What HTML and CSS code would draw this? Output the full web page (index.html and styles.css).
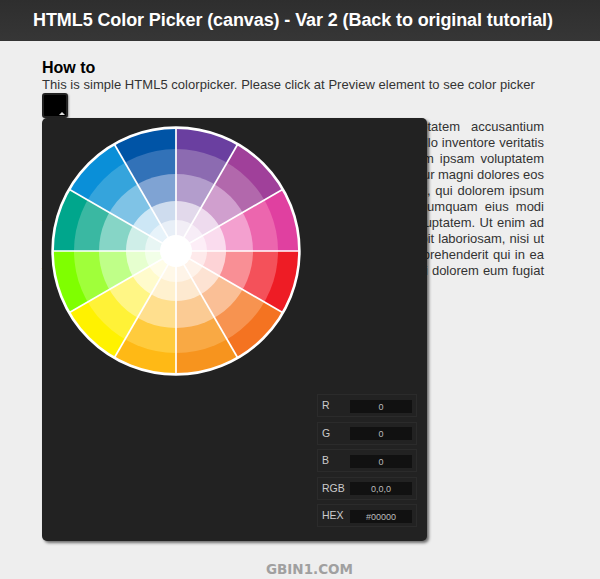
FILE: index.html
```html
<!DOCTYPE html>
<html lang="en">
<head>
<meta charset="utf-8">
<title>HTML5 Color Picker (canvas)</title>
<link rel="stylesheet" href="styles.css">
</head>
<body>
<header class="bar"><h1>HTML5 Color Picker (canvas) - Var 2 (Back to original tutorial)</h1></header>
<main class="content">
  <h2>How to</h2>
  <p class="intro">This is simple HTML5 colorpicker. Please click at Preview element to see color picker</p>
  <div class="anchor">
    <div class="preview"><span class="caret"></span></div>
    <section class="picker">
      <div class="wheel">
        <div class="ring r1"></div>
        <div class="ring r2"></div>
        <div class="ring r3"></div>
        <div class="ring r4"></div>
        <div class="ring r5"></div>
        <svg class="spokes" viewBox="-125 -125 250 250" width="250" height="250" aria-hidden="true">
          <circle r="123.4" fill="none" stroke="#fff" stroke-width="2.6"/>
          <g stroke="#fff" stroke-width="1.7">
            <line x1="0" y1="-123" x2="0" y2="123"/>
            <line x1="-123" y1="0" x2="123" y2="0"/>
            <line x1="61.5" y1="-106.5" x2="-61.5" y2="106.5"/>
            <line x1="106.5" y1="-61.5" x2="-106.5" y2="61.5"/>
            <line x1="-61.5" y1="-106.5" x2="61.5" y2="106.5"/>
            <line x1="-106.5" y1="-61.5" x2="106.5" y2="61.5"/>
          </g>
          <circle r="16" fill="#fff"/>
        </svg>
      </div>
      <div class="values">
        <div class="row"><label>R</label><output>0</output></div>
        <div class="row"><label>G</label><output>0</output></div>
        <div class="row"><label>B</label><output>0</output></div>
        <div class="row"><label>RGB</label><output>0,0,0</output></div>
        <div class="row"><label>HEX</label><output>#00000</output></div>
      </div>
    </section>
  </div>
  <p class="lorem">
    <span class="line">Sed ut perspiciatis unde omnis iste natus error sit voluptatem accusantium</span>
    <span class="line">doloremque laudantium, totam rem aperiam, eaque ipsa quae ab illo inventore veritatis</span>
    <span class="line">et quasi architecto beatae vitae dicta sunt explicabo. Nemo enim ipsam voluptatem</span>
    <span class="line">quia voluptas sit aspernatur aut odit aut fugit, sed quia consequuntur magni dolores eos</span>
    <span class="line">qui ratione voluptatem sequi nesciunt. Neque porro quisquam est, qui dolorem ipsum</span>
    <span class="line">quia dolor sit amet, consectetur, adipisci velit, sed quia non numquam eius modi</span>
    <span class="line">tempora incidunt ut labore et dolore magnam aliquam quaerat voluptatem. Ut enim ad</span>
    <span class="line">minima veniam, quis nostrum exercitationem ullam corporis suscipit laboriosam, nisi ut</span>
    <span class="line">aliquid ex ea commodi consequatur? Quis autem vel eum iure reprehenderit qui in ea</span>
    <span class="line">voluptate velit esse quam nihil molestiae consequatur, vel illum qui dolorem eum fugiat</span>
    <span class="last">quo voluptas nulla pariatur?</span>
  </p>
</main>
<footer class="mark">GBIN1.COM</footer>
</body>
</html>
```
FILE: styles.css
```css
* { box-sizing: border-box; }
html, body { margin: 0; padding: 0; }
body {
  height: 579px;
  overflow: hidden;
  display: flex;
  flex-direction: column;
  background: #eee;
  color: #333;
  font-family: "Liberation Sans", Arial, sans-serif;
}
.bar {
  height: 41px;
  flex: none;
  background: linear-gradient(#2e2e2e, #363636);
  border-bottom: 1px solid #333;
}
.bar h1 {
  margin: 0;
  padding: 9px 14px 0 0;
  color: #fff;
  font-size: 18px;
  line-height: 22px;
  font-weight: bold;
  letter-spacing: -0.1px;
  text-align: center;
}
.content {
  width: 502px;
  margin: 18px 0 0 42px;
  flex: none;
}
.content h2 {
  margin: 0;
  color: #000;
  font-size: 16px;
  line-height: 18px;
  font-weight: bold;
}
.intro {
  margin: 0;
  font-size: 13px;
  line-height: 16px;
  letter-spacing: 0.035px;
}
.anchor {
  position: relative;
  height: 25px;
}
.preview {
  position: relative;
  width: 26px;
  height: 25px;
  background: #000;
  border: 2px solid #222;
  border-radius: 3px;
  box-shadow: 1px 1px 2px rgba(0,0,0,.35);
}
.caret {
  position: absolute;
  right: 1px;
  bottom: 1px;
  width: 0;
  height: 0;
  border-left: 3px solid transparent;
  border-right: 3px solid transparent;
  border-bottom: 3px solid #ddd;
}
.picker {
  position: absolute;
  z-index: 2;
  left: 0;
  top: 25px;
  width: 385px;
  height: 423px;
  padding: 8px 10px 14px 8.5px;
  display: flex;
  flex-direction: column;
  justify-content: space-between;
  background: #222;
  border-radius: 5px;
  box-shadow: 2px 2px 3px rgba(0,0,0,.55);
}
.wheel {
  width: 250px;
  height: 250px;
  display: grid;
  place-items: center;
}
.wheel > * { grid-area: 1 / 1; }
.spokes { display: block; }
.ring { border-radius: 50%; }
.r1 {
  width: 246px; height: 246px;
  background: conic-gradient(#6a3fa0 0 30deg, #a0409a 0 60deg, #e040a0 0 90deg, #ee1c25 0 120deg, #f47321 0 150deg, #f7941e 0 180deg, #ffb915 0 210deg, #fff200 0 240deg, #7fff00 0 270deg, #00a68c 0 300deg, #0a8fd8 0 330deg, #0054a6 0 360deg);
}
.r2 {
  width: 204px; height: 204px;
  background: conic-gradient(#8c6bb1 0 30deg, #b268ac 0 60deg, #ec66ae 0 90deg, #f4515a 0 120deg, #f79350 0 150deg, #f9a944 0 180deg, #ffcb3d 0 210deg, #fff237 0 240deg, #a0ff3a 0 270deg, #3ab8a2 0 300deg, #35a4dc 0 330deg, #3272b8 0 360deg);
}
.r3 {
  width: 154px; height: 154px;
  background: conic-gradient(#b39dcc 0 30deg, #d09fce 0 60deg, #f3a0cf 0 90deg, #f98f95 0 120deg, #fabf96 0 150deg, #fbcb94 0 180deg, #ffdf8e 0 210deg, #fff685 0 240deg, #bfff88 0 270deg, #86d5c6 0 300deg, #7fc3e6 0 330deg, #7fa3d3 0 360deg);
}
.r4 {
  width: 100px; height: 100px;
  background: conic-gradient(#e2d9eb 0 30deg, #eedbee 0 60deg, #fadcee 0 90deg, #fdd3d6 0 120deg, #fde3d3 0 150deg, #fde9d0 0 180deg, #fff1cf 0 210deg, #fffbcc 0 240deg, #e6ffcf 0 270deg, #cfeee8 0 300deg, #cde7f6 0 330deg, #cedcee 0 360deg);
}
.r5 {
  width: 62px; height: 62px;
  background: conic-gradient(#f2eef6 0 30deg, #f7edf7 0 60deg, #fdeef7 0 90deg, #feeaeb 0 120deg, #fef2e9 0 150deg, #fef4e8 0 180deg, #fff8e8 0 210deg, #fffde8 0 240deg, #f2ffe8 0 270deg, #e8f6f4 0 300deg, #e7f3fa 0 330deg, #e8eff7 0 360deg);
}
.values {
  align-self: flex-end;
  width: 100px;
  display: flex;
  flex-direction: column;
  gap: 4.5px;
}
.row {
  height: 23px;
  padding: 0 4px;
  display: flex;
  align-items: center;
  justify-content: space-between;
  border: 1px solid #2b2b2b;
}
.row label {
  color: #ccc;
  font-size: 10.5px;
  line-height: 12px;
  margin-top: -1px;
}
.row output {
  width: 62px;
  height: 13px;
  margin-top: 1px;
  background: #111;
  color: #bbb;
  font-size: 9px;
  line-height: 14px;
  text-align: center;
}
.lorem {
  margin: 1px 0 0;
  font-size: 13px;
  line-height: 16px;
}
.line {
  display: block;
  word-spacing: -1px;
  text-align: justify;
  text-align-last: justify;
}
.last { display: block; }
.mark {
  margin-top: auto;
  padding: 0 0 4px 19px;
  color: #a0a0a0;
  font-family: "DejaVu Sans", sans-serif;
  font-size: 13.5px;
  line-height: 12px;
  font-weight: bold;
  text-align: center;
}
```
